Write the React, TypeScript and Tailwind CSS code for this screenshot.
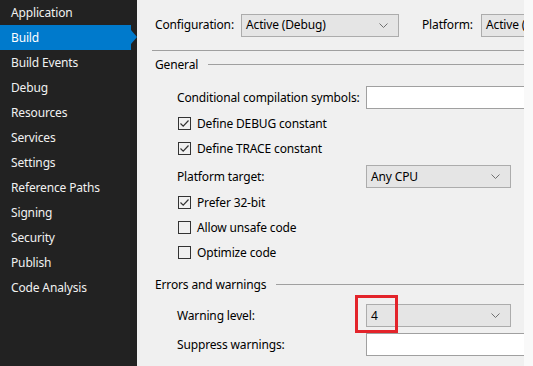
import type { ReactNode } from 'react';

const font = { fontFamily: '"Segoe UI", "Noto Sans", "DejaVu Sans", sans-serif' };

const navItems = [
  'Application',
  'Build',
  'Build Events',
  'Debug',
  'Resources',
  'Services',
  'Settings',
  'Reference Paths',
  'Signing',
  'Security',
  'Publish',
  'Code Analysis',
];

function Chevron() {
  return (
    <svg width="9" height="5" viewBox="0 0 9 5" className="shrink-0">
      <polyline points="0.5,0.5 4.5,4.5 8.5,0.5" fill="none" stroke="#707070" strokeWidth="1" />
    </svg>
  );
}

function Select({ value, width, children }: { value: string; width: string; children?: ReactNode }) {
  return (
    <div className={`relative flex h-[23px] shrink-0 items-center justify-between border border-[#acacac] bg-[#e5e5e5] pl-[4px] pr-[10px] text-black ${width}`}>
      <span className="whitespace-nowrap">{value}</span>
      <Chevron />
      {children}
    </div>
  );
}

function TextBox() {
  return <div className="h-[23px] w-[180px] shrink-0 border border-[#a0a0a0] bg-white" />;
}

function Check({ checked, label }: { checked: boolean; label: string }) {
  return (
    <div className="flex h-[25px] items-center pl-[26px]">
      <div className="flex h-[13px] w-[13px] items-center justify-center border border-[#333333] bg-[#f0f0f0]">
        {checked && (
          <svg width="11" height="11" viewBox="0 0 11 11">
            <polyline points="1.5,5.5 4.2,8.2 9.5,2.5" fill="none" stroke="#333333" strokeWidth="1.2" />
          </svg>
        )}
      </div>
      <span className="ml-[6px]">{label}</span>
    </div>
  );
}

function SectionHeader({ title, className }: { title: string; className: string }) {
  return (
    <div className={`flex h-[27px] items-center pl-[3px] ${className}`}>
      <span>{title}</span>
      <div className="ml-[10px] h-px flex-1 bg-[#a0a0a0]" />
    </div>
  );
}

function LabeledRow({ label, className, children }: { label: string; className: string; children: ReactNode }) {
  return (
    <div className={`flex h-[23px] items-center pl-[25px] ${className}`}>
      <span className="w-[189px] shrink-0">{label}</span>
      {children}
    </div>
  );
}

export default function App() {
  return (
    <div className="flex h-[366px] w-[533px] overflow-hidden bg-[#f9f9f9] text-[12px] tracking-[-0.15px]" style={font}>
      <div className="w-[137px] shrink-0 bg-[#222222] text-[#f1f1f1]">
        {navItems.map((item) =>
          item === 'Build' ? (
            <div key={item} className="relative flex h-[25px] w-[131px] items-center bg-[#007acc] pl-[11px] text-white">
              {item}
              <div className="absolute right-[-6px] top-[5px] h-0 w-0 border-y-[7.5px] border-l-[6px] border-y-transparent border-l-[#007acc]" />
            </div>
          ) : (
            <div key={item} className="flex h-[25px] items-center pl-[11px]">
              {item}
            </div>
          )
        )}
      </div>

      <div className="w-[387px] shrink-0 overflow-hidden bg-[#f0f0f0] pl-[15px] text-black">
        <div className="w-[400px]">
          <div className="flex h-[51px] items-center border-b border-[#a0a0a0] pl-[3px]">
            <span className="w-[86px] shrink-0">Configuration:</span>
            <Select value="Active (Debug)" width="w-[158px]" />
            <span className="ml-[23px] w-[59px] shrink-0">Platform:</span>
            <Select value="Active (Any CPU)" width="w-[158px]" />
          </div>

          <SectionHeader title="General" className="mr-[13px]" />

          <LabeledRow label="Conditional compilation symbols:" className="mt-[8px]">
            <TextBox />
          </LabeledRow>

          <div className="mt-[2px]">
            <Check checked label="Define DEBUG constant" />
            <Check checked label="Define TRACE constant" />
          </div>

          <LabeledRow label="Platform target:" className="mt-[4px]">
            <Select value="Any CPU" width="w-[145px]" />
          </LabeledRow>

          <div className="mt-[2px]">
            <Check checked label="Prefer 32-bit" />
            <Check checked={false} label="Allow unsafe code" />
            <Check checked={false} label="Optimize code" />
          </div>

          <SectionHeader title="Errors and warnings" className="mt-[6px] mr-[13px]" />

          <LabeledRow label="Warning level:" className="mt-[6px]">
            <Select value="4" width="w-[145px]">
              <div className="absolute left-[-12px] top-[-10px] h-[38px] w-[43px] border-[3px] border-[#e3242b]" />
            </Select>
          </LabeledRow>

          <LabeledRow label="Suppress warnings:" className="mt-[6px]">
            <TextBox />
          </LabeledRow>
        </div>
      </div>

      <div className="flex-1 bg-[#f9f9f9]" />
    </div>
  );
}
